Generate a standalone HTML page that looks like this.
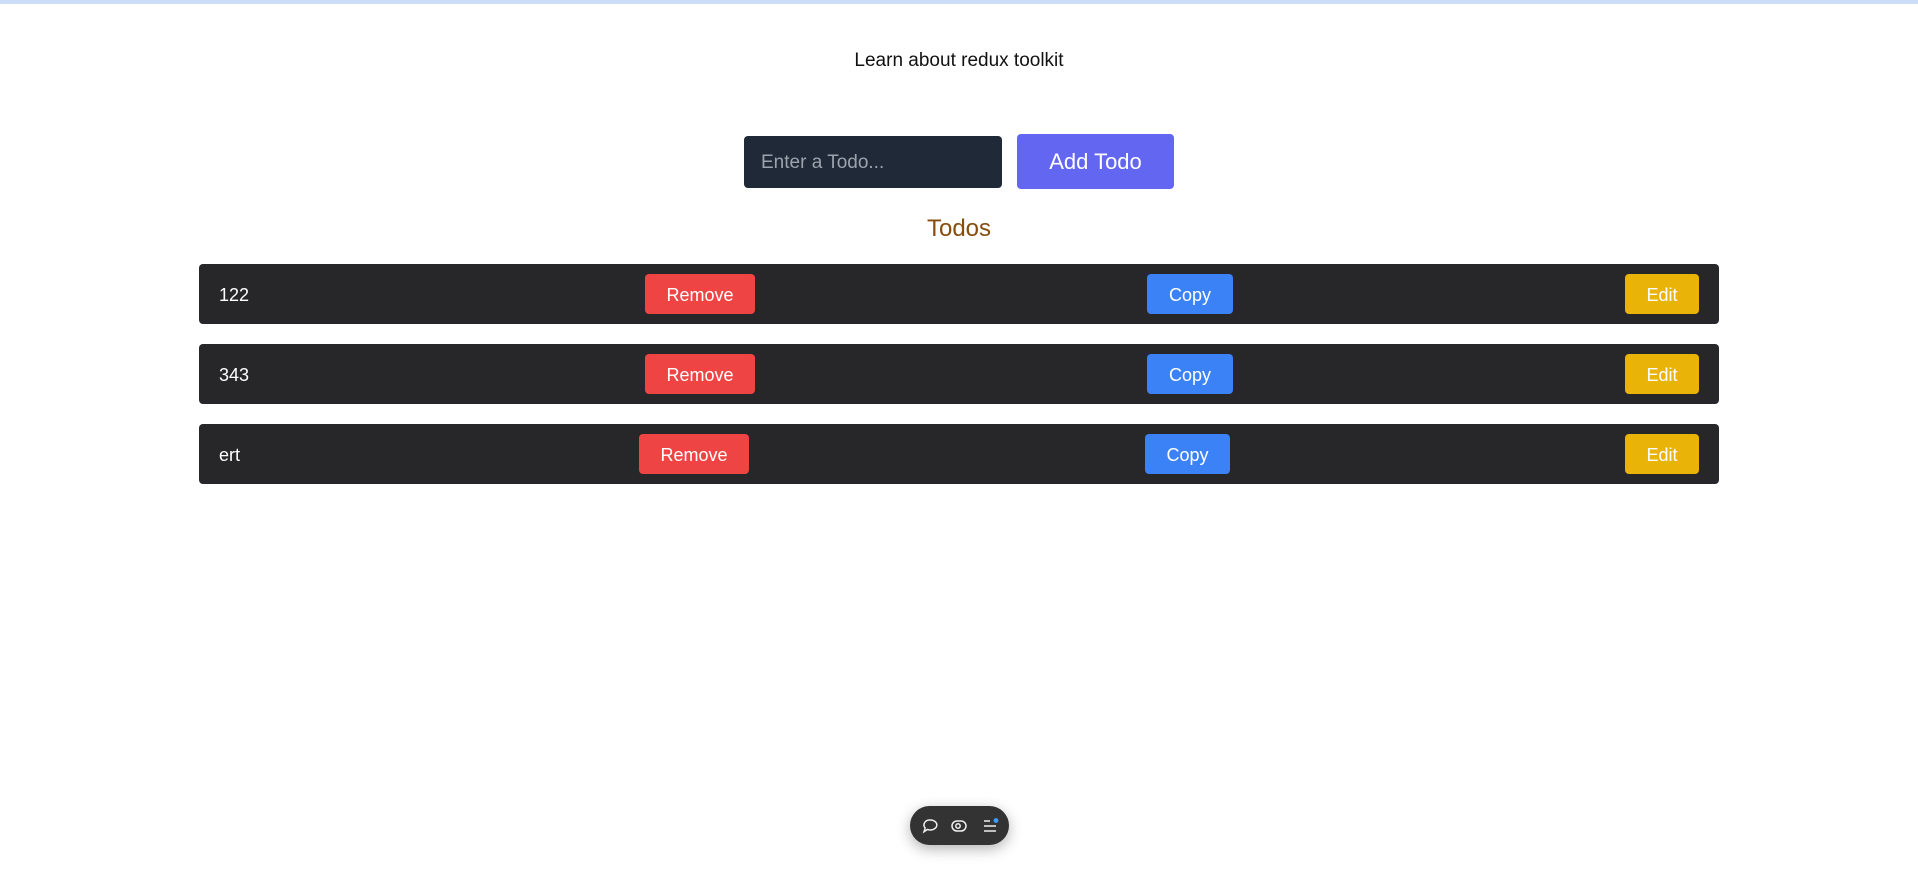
<!DOCTYPE html>
<html><head><meta charset="utf-8"><style>
*{box-sizing:border-box;margin:0;padding:0}
body{width:1918px;height:879px;background:#fff;font-family:"Liberation Sans","DejaVu Sans",sans-serif;position:relative;overflow:hidden}
.a{position:absolute}
.top{left:0;top:0;width:1918px;height:4px;background:#cddff8}
.btn{position:absolute;color:#fff;font-size:18px;border-radius:4px;display:flex;align-items:center;justify-content:center;height:40px;padding-top:2px}
.row{position:absolute;left:199px;width:1520px;height:60px;background:#27272a;border-radius:4px}
.row .t{position:absolute;left:20px;top:1px;line-height:60px;color:#fff;font-size:18px}
.r{background:#ef4444}.c{background:#3b82f6}.e{background:#eab308}
</style></head><body>
<div class="a top"></div>
<div class="a" style="left:0;width:1918px;top:50px;text-align:center;font-size:19px;color:#111">Learn about redux toolkit</div>
<div class="a" style="left:744px;top:136px;width:258px;height:52px;background:#1f2937;border-radius:4px;color:#9ca3af;font-size:19px;line-height:54px;padding-left:17px">Enter a Todo...</div>
<div class="a" style="left:1017px;top:134px;width:157px;height:55px;background:#6366f1;border-radius:4px;color:#fff;font-size:22px;line-height:56px;text-align:center">Add Todo</div>
<div class="a" style="left:0;width:1918px;top:215px;text-align:center;font-size:24px;color:#854d0e">Todos</div>

<div class="row" style="top:264px"><div class="t">122</div></div>
<div class="btn r" style="left:645px;top:274px;width:110px">Remove</div>
<div class="btn c" style="left:1147px;top:274px;width:86px">Copy</div>
<div class="btn e" style="left:1625px;top:274px;width:74px">Edit</div>

<div class="row" style="top:344px"><div class="t">343</div></div>
<div class="btn r" style="left:645px;top:354px;width:110px">Remove</div>
<div class="btn c" style="left:1147px;top:354px;width:86px">Copy</div>
<div class="btn e" style="left:1625px;top:354px;width:74px">Edit</div>

<div class="row" style="top:424px"><div class="t">ert</div></div>
<div class="btn r" style="left:639px;top:434px;width:110px">Remove</div>
<div class="btn c" style="left:1145px;top:434px;width:85px">Copy</div>
<div class="btn e" style="left:1625px;top:434px;width:74px">Edit</div>

<div class="a" style="left:910px;top:806px;width:99px;height:39px;background:#333;border-radius:20px;box-shadow:0 4px 14px rgba(0,0,0,.3)">
<svg width="99" height="39" viewBox="0 0 99 39" fill="none" stroke="#eee" stroke-width="1.5">
<path d="M20 14a6.5 5 0 1 1 -2.5 9.5l-3.5 2.2 1.2-3.6a5.5 5 0 0 1 4.8-8.1z"/>
<rect x="42" y="15" width="14" height="10" rx="5"/>
<circle cx="48" cy="20" r="2.2"/>
<path d="M74 15h6M74 20h12M74 25h12"/>
<circle cx="86" cy="14.5" r="2.4" fill="#3b9cff" stroke="none"/>
</svg></div>
</body></html>
